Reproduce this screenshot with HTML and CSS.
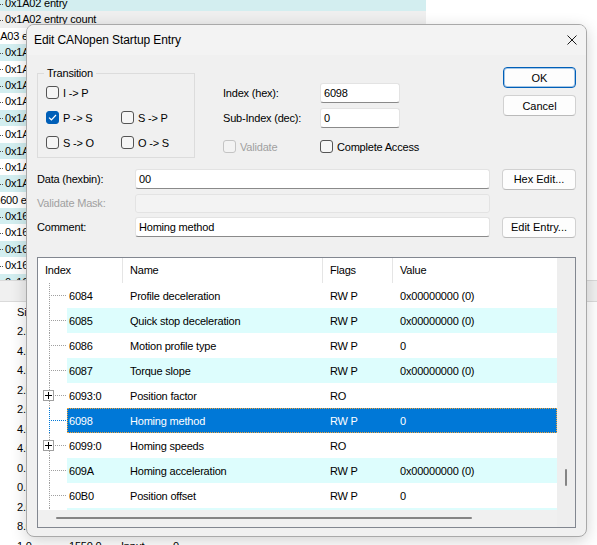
FILE: index.html
```html
<!DOCTYPE html>
<html lang="en">
<head>
<meta charset="UTF-8">
<title>Edit CANopen Startup Entry</title>
<link rel="stylesheet" href="styles.css">
</head>
<body>
<div class="app">
  <div class="tree">
    <div class="node cyan"><span class="dot"></span>0x1A02 entry</div>
    <div class="node hover"><span class="dot"></span>0x1A02 entry count</div>
    <div class="node parent">0x1A03 entry</div>
    <div class="node cyan"><span class="dot"></span>0x1A03 entry 0</div>
    <div class="node"><span class="dot"></span>0x1A03 entry 1</div>
    <div class="node cyan"><span class="dot"></span>0x1A03 entry 2</div>
    <div class="node"><span class="dot"></span>0x1A03 entry 3</div>
    <div class="node cyan"><span class="dot"></span>0x1A03 entry 4</div>
    <div class="node"><span class="dot"></span>0x1A03 entry 5</div>
    <div class="node cyan"><span class="dot"></span>0x1A03 entry 6</div>
    <div class="node"><span class="dot"></span>0x1A03 entry 7</div>
    <div class="node cyan"><span class="dot"></span>0x1A03 entry count</div>
    <div class="node parent">0x1600 entry</div>
    <div class="node cyan"><span class="dot"></span>0x1600 entry 0</div>
    <div class="node"><span class="dot"></span>0x1600 entry 1</div>
    <div class="node cyan"><span class="dot"></span>0x1600 entry 2</div>
    <div class="node"><span class="dot"></span>0x1600 entry 3</div>
    <div class="node cyan"><span class="dot"></span>0x1600 entry 4</div>
  </div>
  <div class="band"></div>
  <div class="grid">
    <div class="grid-row head"><span>Size</span></div>
    <div class="grid-row"><span>2.0</span></div>
    <div class="grid-row"><span>4.0</span></div>
    <div class="grid-row"><span>4.0</span></div>
    <div class="grid-row"><span>2.0</span></div>
    <div class="grid-row"><span>2.0</span></div>
    <div class="grid-row"><span>4.0</span></div>
    <div class="grid-row"><span>4.0</span></div>
    <div class="grid-row"><span>0.1</span></div>
    <div class="grid-row"><span>0.1</span></div>
    <div class="grid-row"><span>2.0</span></div>
    <div class="grid-row"><span>8.0</span></div>
    <div class="grid-row"><span>1.0</span><span>1550.0</span><span>Input</span><span>0</span></div>
  </div>
</div>

<div class="dialog">
  <div class="titlebar">
    <span>Edit CANopen Startup Entry</span>
    <svg class="close" width="10" height="10" viewBox="0 0 10 10"><path d="M0.5 0.5 L9.5 9.5 M9.5 0.5 L0.5 9.5" stroke="#1a1a1a" stroke-width="1" fill="none"/></svg>
  </div>
  <div class="dlg-body">
    <div class="top">
      <fieldset class="transition">
        <legend>Transition</legend>
        <label class="chk"><span class="box"></span>I -&gt; P</label>
        <span></span>
        <label class="chk"><span class="box on"><svg width="9" height="7" viewBox="0 0 9 7"><path d="M1 3.6 L3.4 5.8 L8 1" stroke="#fff" stroke-width="1.2" fill="none"/></svg></span>P -&gt; S</label>
        <label class="chk"><span class="box"></span>S -&gt; P</label>
        <label class="chk"><span class="box"></span>S -&gt; O</label>
        <label class="chk"><span class="box"></span>O -&gt; S</label>
      </fieldset>
      <div class="fields">
        <span>Index (hex):</span>
        <span class="input">6098</span>
        <span>Sub-Index (dec):</span>
        <span class="input">0</span>
        <label class="chk off"><span class="box"></span>Validate</label>
        <label class="chk wide"><span class="box"></span>Complete Access</label>
      </div>
      <div class="buttons">
        <button class="btn default">OK</button>
        <button class="btn">Cancel</button>
      </div>
    </div>

    <div class="form-row">
      <span>Data (hexbin):</span>
      <span class="input">00</span>
      <button class="btn">Hex Edit...</button>
    </div>
    <div class="form-row">
      <span class="dis">Validate Mask:</span>
      <span class="input dis"></span>
    </div>
    <div class="form-row">
      <span>Comment:</span>
      <span class="input">Homing method</span>
      <button class="btn">Edit Entry...</button>
    </div>

    <div class="list">
      <div class="list-main">
        <div class="list-head">
          <span class="h-idx">Index</span>
          <span class="h-name">Name</span>
          <span class="h-flags">Flags</span>
          <span class="h-val">Value</span>
        </div>
        <div class="rows">
          <div class="row">
            <div class="gutter"><div class="twig"></div></div>
            <div class="cells"><span class="c-idx">6084</span><span class="c-name">Profile deceleration</span><span class="c-flags">RW P</span><span class="c-val">0x00000000 (0)</span></div>
          </div>
          <div class="row alt">
            <div class="gutter"><div class="twig"></div></div>
            <div class="cells"><span class="c-idx">6085</span><span class="c-name">Quick stop deceleration</span><span class="c-flags">RW P</span><span class="c-val">0x00000000 (0)</span></div>
          </div>
          <div class="row">
            <div class="gutter"><div class="twig"></div></div>
            <div class="cells"><span class="c-idx">6086</span><span class="c-name">Motion profile type</span><span class="c-flags">RW P</span><span class="c-val">0</span></div>
          </div>
          <div class="row alt">
            <div class="gutter"><div class="twig"></div></div>
            <div class="cells"><span class="c-idx">6087</span><span class="c-name">Torque slope</span><span class="c-flags">RW P</span><span class="c-val">0x00000000 (0)</span></div>
          </div>
          <div class="row">
            <div class="gutter"><div class="twig"><span class="plus"><svg width="7" height="7" viewBox="0 0 7 7"><path d="M0 3.5 H7 M3.5 0 V7" stroke="#000" stroke-width="1"/></svg></span></div></div>
            <div class="cells"><span class="c-idx">6093:0</span><span class="c-name">Position factor</span><span class="c-flags">RO</span><span class="c-val"></span></div>
          </div>
          <div class="row sel">
            <div class="gutter"><div class="twig"></div></div>
            <div class="cells"><span class="c-idx">6098</span><span class="c-name">Homing method</span><span class="c-flags">RW P</span><span class="c-val">0</span></div>
          </div>
          <div class="row">
            <div class="gutter"><div class="twig"><span class="plus"><svg width="7" height="7" viewBox="0 0 7 7"><path d="M0 3.5 H7 M3.5 0 V7" stroke="#000" stroke-width="1"/></svg></span></div></div>
            <div class="cells"><span class="c-idx">6099:0</span><span class="c-name">Homing speeds</span><span class="c-flags">RO</span><span class="c-val"></span></div>
          </div>
          <div class="row alt">
            <div class="gutter"><div class="twig"></div></div>
            <div class="cells"><span class="c-idx">609A</span><span class="c-name">Homing acceleration</span><span class="c-flags">RW P</span><span class="c-val">0x00000000 (0)</span></div>
          </div>
          <div class="row">
            <div class="gutter"><div class="twig"></div></div>
            <div class="cells"><span class="c-idx">60B0</span><span class="c-name">Position offset</span><span class="c-flags">RW P</span><span class="c-val">0</span></div>
          </div>
          <div class="row alt">
            <div class="gutter"><div class="twig"></div></div>
            <div class="cells"><span class="c-idx"></span></div>
          </div>
        </div>
      </div>
      <div class="vscroll"><div class="vthumb"></div></div>
      <div class="hscroll"><div class="hthumb"></div></div>
    </div>
  </div>
</div>
</body>
</html>
```

FILE: styles.css
```css
* {
box-sizing: border-box;
}
body {
margin: 0;
width: 597px;
height: 545px;
overflow: hidden;
position: relative;
font-family: "Liberation Sans", Arial, sans-serif;
font-size: 11px;
letter-spacing: -0.2px;
color: #000;
background-color: #fff;
}

/* application behind the dialog */
.tree {
width: 426px;
height: 285px;
margin-top: -5px;
overflow: hidden;
}
.node {
height: 16.4px;
line-height: 16.4px;
white-space: nowrap;
}
.node .dot {
display: inline-block;
width: 3px;
border-top: 1px dotted #555;
vertical-align: middle;
margin-right: 2px;
}
.node.parent {
text-indent: -17px;
}
.node.cyan {
background-color: #d3eef0;
}
.node.hover {
background-color: #efefef;
}
.band {
height: 22px;
background-color: #f0f0f0;
border-top: 1px solid #dadada;
border-bottom: 1px solid #dadada;
}
.grid-row {
display: flex;
height: 19.5px;
line-height: 19.5px;
padding-left: 17px;
white-space: nowrap;
}
.grid-row.head {
height: 20px;
line-height: 20px;
}
.grid-row span {
width: 52px;
}

/* dialog */
.dialog {
position: absolute;
left: 26px;
top: 24px;
width: 561px;
height: 513px;
background-color: #f0f0f0;
border: 1px solid #a9a9a9;
border-radius: 8px;
box-shadow: 0 4px 16px rgba(0, 0, 0, 0.18);
overflow: hidden;
}
.titlebar {
height: 30px;
display: flex;
align-items: center;
justify-content: space-between;
padding: 0 9px 0 7px;
background-color: #f3f3f3;
font-size: 12px;
letter-spacing: -0.1px;
}
.dlg-body {
padding: 0 10px 8px;
}
.top {
display: flex;
align-items: flex-start;
height: 112px;
}
.transition {
width: 158px;
min-width: 0;
margin: 11px 0 0;
padding: 0 0 2px 8px;
border: 1px solid #dcdcdc;
display: grid;
grid-template-columns: 75px auto;
grid-auto-rows: 25px;
}
.transition legend {
padding: 0 3px;
margin-left: -2px;
line-height: 14px;
}
.chk {
display: flex;
align-items: center;
gap: 4px;
white-space: nowrap;
}
.box {
width: 13px;
height: 13px;
flex: none;
border: 1px solid #555;
border-radius: 3px;
background-color: #f6f6f6;
display: flex;
align-items: center;
justify-content: center;
}
.box.on {
background-color: #005fb8;
border-color: #005fb8;
}
.chk.off {
color: #a0a0a0;
}
.chk.off .box {
border-color: #c4c4c4;
background-color: #f3f3f3;
}
.fields {
margin: 25px 0 0 28px;
display: grid;
grid-template-columns: 97px 80px;
grid-template-rows: 25px 25px 33px;
align-items: center;
}
.input {
display: block;
height: 20px;
padding: 0 3px;
line-height: 18px;
background-color: #fff;
border: 1px solid #e3e3e3;
border-bottom-color: #8a8a8a;
border-radius: 3px;
white-space: nowrap;
}
.input.dis {
background-color: #f3f3f3;
border-color: #e3e3e3;
height: 19px;
}
.dis {
color: #a0a0a0;
}
.buttons {
margin: 12px 0 0 auto;
width: 73px;
display: flex;
flex-direction: column;
gap: 7px;
}
.btn {
height: 21px;
padding: 0;
font: inherit;
color: #000;
background-color: #fdfdfd;
border: 1px solid #d1d1d1;
border-bottom-color: #bababa;
border-radius: 4px;
}
.btn.default {
border-color: #005fb8;
box-shadow: inset 0 0 0 1px rgba(0, 95, 184, 0.35);
}
.form-row {
display: grid;
grid-template-columns: 98px 355px 1fr;
align-items: center;
height: 24px;
white-space: nowrap;
}
.form-row .btn {
margin-left: 12px;
width: 74px;
}

/* list view */
.list {
margin-top: 18px;
height: 271px;
border: 1px solid #828790;
background-color: #fff;
display: grid;
grid-template-columns: 1fr 18px;
grid-template-rows: 1fr 17px;
}
.list-main {
overflow: hidden;
}
.list-head {
display: flex;
height: 25px;
}
.list-head span {
line-height: 25px;
padding-left: 7px;
border-right: 1px solid #e5e5e5;
}
.h-idx {
width: 85px;
}
.h-name {
width: 200px;
}
.h-flags {
width: 70px;
}
.list-head .h-val {
flex: 1;
border-right: none;
}
.rows {
height: 227px;
overflow: hidden;
}
.row {
display: flex;
height: 25px;
white-space: nowrap;
}
.gutter {
width: 29px;
flex: none;
display: flex;
}
.twig {
margin-left: 11px;
width: 18px;
display: flex;
align-items: center;
border-left: 1px dotted #a0a0a0;
background-image: linear-gradient(to right, #a0a0a0 50%, transparent 50%);
background-size: 2px 1px;
background-position: 1px 12px;
background-repeat: repeat-x;
}
.plus {
width: 11px;
height: 11px;
margin-left: -7px;
border: 1px solid #a0a0a0;
background-color: #fff;
display: flex;
align-items: center;
justify-content: center;
}
.cells {
flex: 1;
display: flex;
align-items: center;
}
.c-idx {
width: 56px;
padding-left: 2px;
}
.c-name {
width: 200px;
padding-left: 7px;
}
.c-flags {
width: 70px;
padding-left: 7px;
}
.c-val {
flex: 1;
padding-left: 7px;
}
.row.alt .cells {
background-color: #ddfdfd;
}
.row.sel .cells {
background-color: #0078d7;
color: #fff;
outline: 1px dotted #f0a33a;
outline-offset: -1px;
}
.row.sel .twig {
border-left-color: #0078d7;
background-image: linear-gradient(to right, #0078d7 50%, transparent 50%);
}
.vscroll {
grid-row: 1 / 3;
grid-column: 2;
background-color: #eeeeee;
padding: 211px 0 0 8px;
}
.vthumb {
width: 2px;
height: 17px;
border-radius: 1px;
background-color: #858585;
}
.hscroll {
grid-row: 2;
grid-column: 1;
background-color: #f0f0f0;
padding: 7px 0 0 18px;
}
.hthumb {
width: 416px;
height: 2px;
border-radius: 1px;
background-color: #858585;
}
```
